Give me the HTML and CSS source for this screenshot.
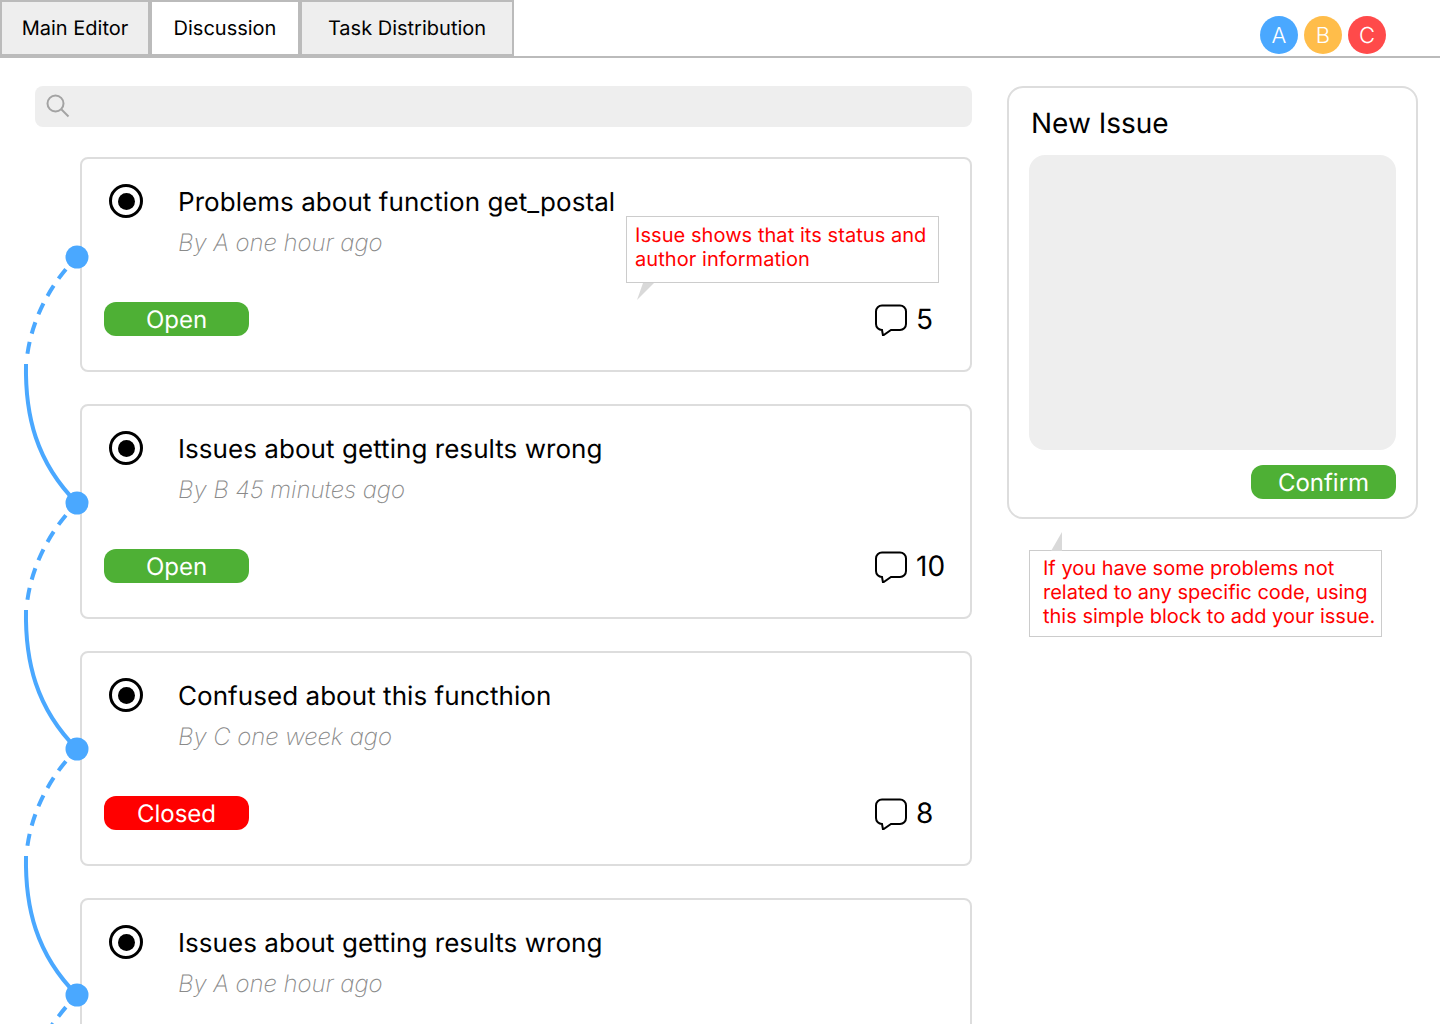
FILE: index.html
```html
<!DOCTYPE html>
<html lang="en">
<head>
    <meta charset="UTF-8">
    <title>Discussion</title>
    <link rel="stylesheet" href="styles.css">
</head>
<body>
    <header class="topbar">
        <nav class="tabs">
            <div class="tab tab-main">Main Editor</div>
            <div class="tab tab-discussion active">Discussion</div>
            <div class="tab tab-tasks">Task Distribution</div>
        </nav>
        <div class="users">
            <div class="user user-a">A</div>
            <div class="user user-b">B</div>
            <div class="user user-c">C</div>
        </div>
    </header>

    <main class="page">
        <section class="issues">
            <div class="search">
                <svg class="search-icon" width="26" height="26" viewBox="0 0 26 26" fill="none" stroke="#a3a3a3" stroke-width="2">
                    <circle cx="10.5" cy="10.5" r="8"/>
                    <path d="M16.500 16.500l7 7"/>
                </svg>
            </div>

            <div class="issue-list">
                <svg class="timeline" width="100" height="900" viewBox="0 0 100 900" fill="none" stroke="#4aa8ff" stroke-width="4">
                    <path class="dash" d="M77 100C52 125 32 160 27 200"/>
                    <path d="M26 207C25 258 36 305 77 346"/>
                    <path class="dash" d="M77 346C52 371 32 406 27 446"/>
                    <path d="M26 453C25 504 36 551 77 592"/>
                    <path class="dash" d="M77 592C52 617 32 652 27 692"/>
                    <path d="M26 699C25 750 36 797 77 838"/>
                    <path class="dash" d="M77 838C68 847 60 857 52 868"/>
                    <circle class="dot" cx="77" cy="100" r="11.5"/>
                    <circle class="dot" cx="77" cy="346" r="11.5"/>
                    <circle class="dot" cx="77" cy="592" r="11.5"/>
                    <circle class="dot" cx="77" cy="838" r="11.5"/>
                </svg>

                <article class="issue">
                    <div class="issue-head">
                        <span class="radio"></span>
                        <div>
                            <h2>Problems about function get_postal</h2>
                            <p class="meta">By A one hour ago</p>
                        </div>
                    </div>
                    <div class="issue-foot">
                        <span class="badge open">Open</span>
                        <span class="comments">
                            <svg width="34" height="34" viewBox="0 0 34 34" fill="none" stroke="#000" stroke-width="2">
                                <path d="M8 3.500h18a6 6 0 0 1 6 6v12.500a6 6 0 0 1-6 6h-9l-8 5.500-1-5.500a6 6 0 0 1-6-6v-12.500a6 6 0 0 1 6-6z"/>
                            </svg>
                            <span class="count">5</span>
                        </span>
                    </div>
                    <div class="note note-status">
                        Issue shows that its status and author information
                        <svg class="tail tail-down" width="18" height="18" viewBox="0 0 18 18"><path d="M0 18L6 1h11z" fill="#d9d9d9"/></svg>
                    </div>
                </article>

                <article class="issue">
                    <div class="issue-head">
                        <span class="radio"></span>
                        <div>
                            <h2>Issues about getting results wrong</h2>
                            <p class="meta">By B 45 minutes ago</p>
                        </div>
                    </div>
                    <div class="issue-foot">
                        <span class="badge open">Open</span>
                        <span class="comments">
                            <svg width="34" height="34" viewBox="0 0 34 34" fill="none" stroke="#000" stroke-width="2">
                                <path d="M8 3.500h18a6 6 0 0 1 6 6v12.500a6 6 0 0 1-6 6h-9l-8 5.500-1-5.500a6 6 0 0 1-6-6v-12.500a6 6 0 0 1 6-6z"/>
                            </svg>
                            <span class="count">10</span>
                        </span>
                    </div>
                </article>

                <article class="issue">
                    <div class="issue-head">
                        <span class="radio"></span>
                        <div>
                            <h2>Confused about this functhion</h2>
                            <p class="meta">By C one week ago</p>
                        </div>
                    </div>
                    <div class="issue-foot">
                        <span class="badge closed">Closed</span>
                        <span class="comments">
                            <svg width="34" height="34" viewBox="0 0 34 34" fill="none" stroke="#000" stroke-width="2">
                                <path d="M8 3.500h18a6 6 0 0 1 6 6v12.500a6 6 0 0 1-6 6h-9l-8 5.500-1-5.500a6 6 0 0 1-6-6v-12.500a6 6 0 0 1 6-6z"/>
                            </svg>
                            <span class="count">8</span>
                        </span>
                    </div>
                </article>

                <article class="issue">
                    <div class="issue-head">
                        <span class="radio"></span>
                        <div>
                            <h2>Issues about getting results wrong</h2>
                            <p class="meta">By A one hour ago</p>
                        </div>
                    </div>
                </article>
            </div>
        </section>

        <aside class="side">
            <div class="new-issue">
                <h1>New Issue</h1>
                <div class="new-issue-text"></div>
                <div class="new-issue-foot">
                    <span class="badge open">Confirm</span>
                </div>
            </div>
            <div class="note note-side">
                If you have some problems not related to any specific code, using this simple block to add your issue.
                <svg class="tail tail-up" width="12" height="20" viewBox="0 0 12 20"><path d="M11 0v19H0z" fill="#d9d9d9"/></svg>
            </div>
        </aside>
    </main>
</body>
</html>
```

FILE: styles.css
```css
html, body {
    height: 1024px;
    margin: 0;
    overflow: hidden;
}
body {
    background: #fff;
    color: #000;
    font-family: Inter, "Liberation Sans", sans-serif;
    text-rendering: geometricPrecision;
}
h1, h2, p {
    margin: 0;
    font-weight: 400;
}

.topbar {
    display: flex;
    justify-content: space-between;
    height: 56px;
    border-bottom: 2px solid #bbb;
}
.tabs {
    display: flex;
}
.tab {
    display: flex;
    align-items: center;
    justify-content: center;
    box-sizing: border-box;
    height: 56px;
    border: 2px solid #bbb;
    background: #eee;
    font-size: 20px;
}
.tab-main {
    width: 150px;
}
.tab-discussion {
    width: 150px;
}
.tab-tasks {
    width: 214px;
}
.tab.active {
    background: #fff;
}
.users {
    display: flex;
    gap: 6px;
    padding: 16px 54px 0 0;
}
.user {
    width: 38px;
    height: 38px;
    border-radius: 50%;
    color: #fff;
    font-size: 22px;
    font-weight: 300;
    line-height: 40px;
    text-align: center;
}
.user-a {
    background: #4aa8ff;
}
.user-b {
    background: #ffbd4a;
}
.user-c {
    background: #ff4a4a;
}

.page {
    display: flex;
    gap: 35px;
    padding: 28px 22px 0 35px;
}
.issues {
    width: 937px;
    flex-shrink: 0;
}
.search {
    display: flex;
    align-items: center;
    height: 41px;
    padding-left: 10px;
    border-radius: 8px;
    background: #eee;
}
.search-icon {
    margin-top: -2px;
}
.issue-list {
    position: relative;
    display: flex;
    flex-direction: column;
    gap: 32px;
    margin-top: 30px;
    padding-left: 45px;
}
.timeline {
    position: absolute;
    top: 0;
    left: -35px;
    z-index: 1;
}
.timeline .dash {
    stroke-dasharray: 12 8.5;
    stroke-dashoffset: 4;
}
.timeline .dot {
    fill: #4aa8ff;
    stroke: none;
}
.issue {
    position: relative;
    flex-shrink: 0;
    box-sizing: border-box;
    height: 215px;
    padding: 25px 0 0 22px;
    border: 2px solid #ddd;
    border-radius: 8px;
    background: #fff;
}
.issue-head {
    display: flex;
    gap: 35px;
    padding-left: 5px;
}
.issue h2 {
    font-size: 26px;
    letter-spacing: 0.05px;
    line-height: 38px;
}
.meta {
    margin-top: 2px;
    color: #8a8a8a;
    font-size: 24px;
    font-style: italic;
    font-weight: 200;
    letter-spacing: -0.08px;
    line-height: 38px;
}
.radio {
    display: flex;
    align-items: center;
    justify-content: center;
    box-sizing: border-box;
    width: 34px;
    height: 34px;
    border: 3.5px solid #000;
    border-radius: 50%;
}
.radio::after {
    content: "";
    width: 17px;
    height: 17px;
    border-radius: 50%;
    background: #000;
}
.issue-foot {
    display: flex;
    align-items: center;
    justify-content: space-between;
    margin-top: 40px;
}
.badge {
    display: block;
    width: 145px;
    height: 34px;
    border-radius: 12px;
    color: #fff;
    font-size: 24px;
    line-height: 36px;
    text-align: center;
}
.open {
    background: #4eb035;
}
.closed {
    background: #ff0000;
}
.comments {
    display: flex;
    align-items: center;
    gap: 8px;
    width: 96px;
    font-size: 28px;
}
.note {
    position: absolute;
    box-sizing: border-box;
    border: 1px solid #ccc;
    background: #fff;
    color: #ff0000;
    font-size: 20px;
    line-height: 24px;
}
.note-status {
    top: 57px;
    left: 544px;
    width: 313px;
    height: 67px;
    padding: 6px 8px;
    letter-spacing: 0.06px;
}
.tail {
    position: absolute;
}
.tail-down {
    top: 65px;
    left: 10px;
}
.tail-up {
    top: -19px;
    left: 21px;
}

.side {
    position: relative;
    width: 411px;
    flex-shrink: 0;
}
.new-issue {
    box-sizing: border-box;
    height: 433px;
    padding: 18px 20px 0 22px;
    border: 2px solid #ddd;
    border-radius: 16px;
}
.new-issue h1 {
    font-size: 28px;
    line-height: 34px;
}
.new-issue-text {
    height: 295px;
    margin-top: 15px;
    margin-left: -2px;
    border-radius: 16px;
    background: #eee;
}
.new-issue-foot {
    display: flex;
    justify-content: flex-end;
    margin-top: 15px;
}
.note-side {
    top: 464px;
    left: 22px;
    width: 353px;
    height: 87px;
    padding: 5px 0 0 13px;
}
```
